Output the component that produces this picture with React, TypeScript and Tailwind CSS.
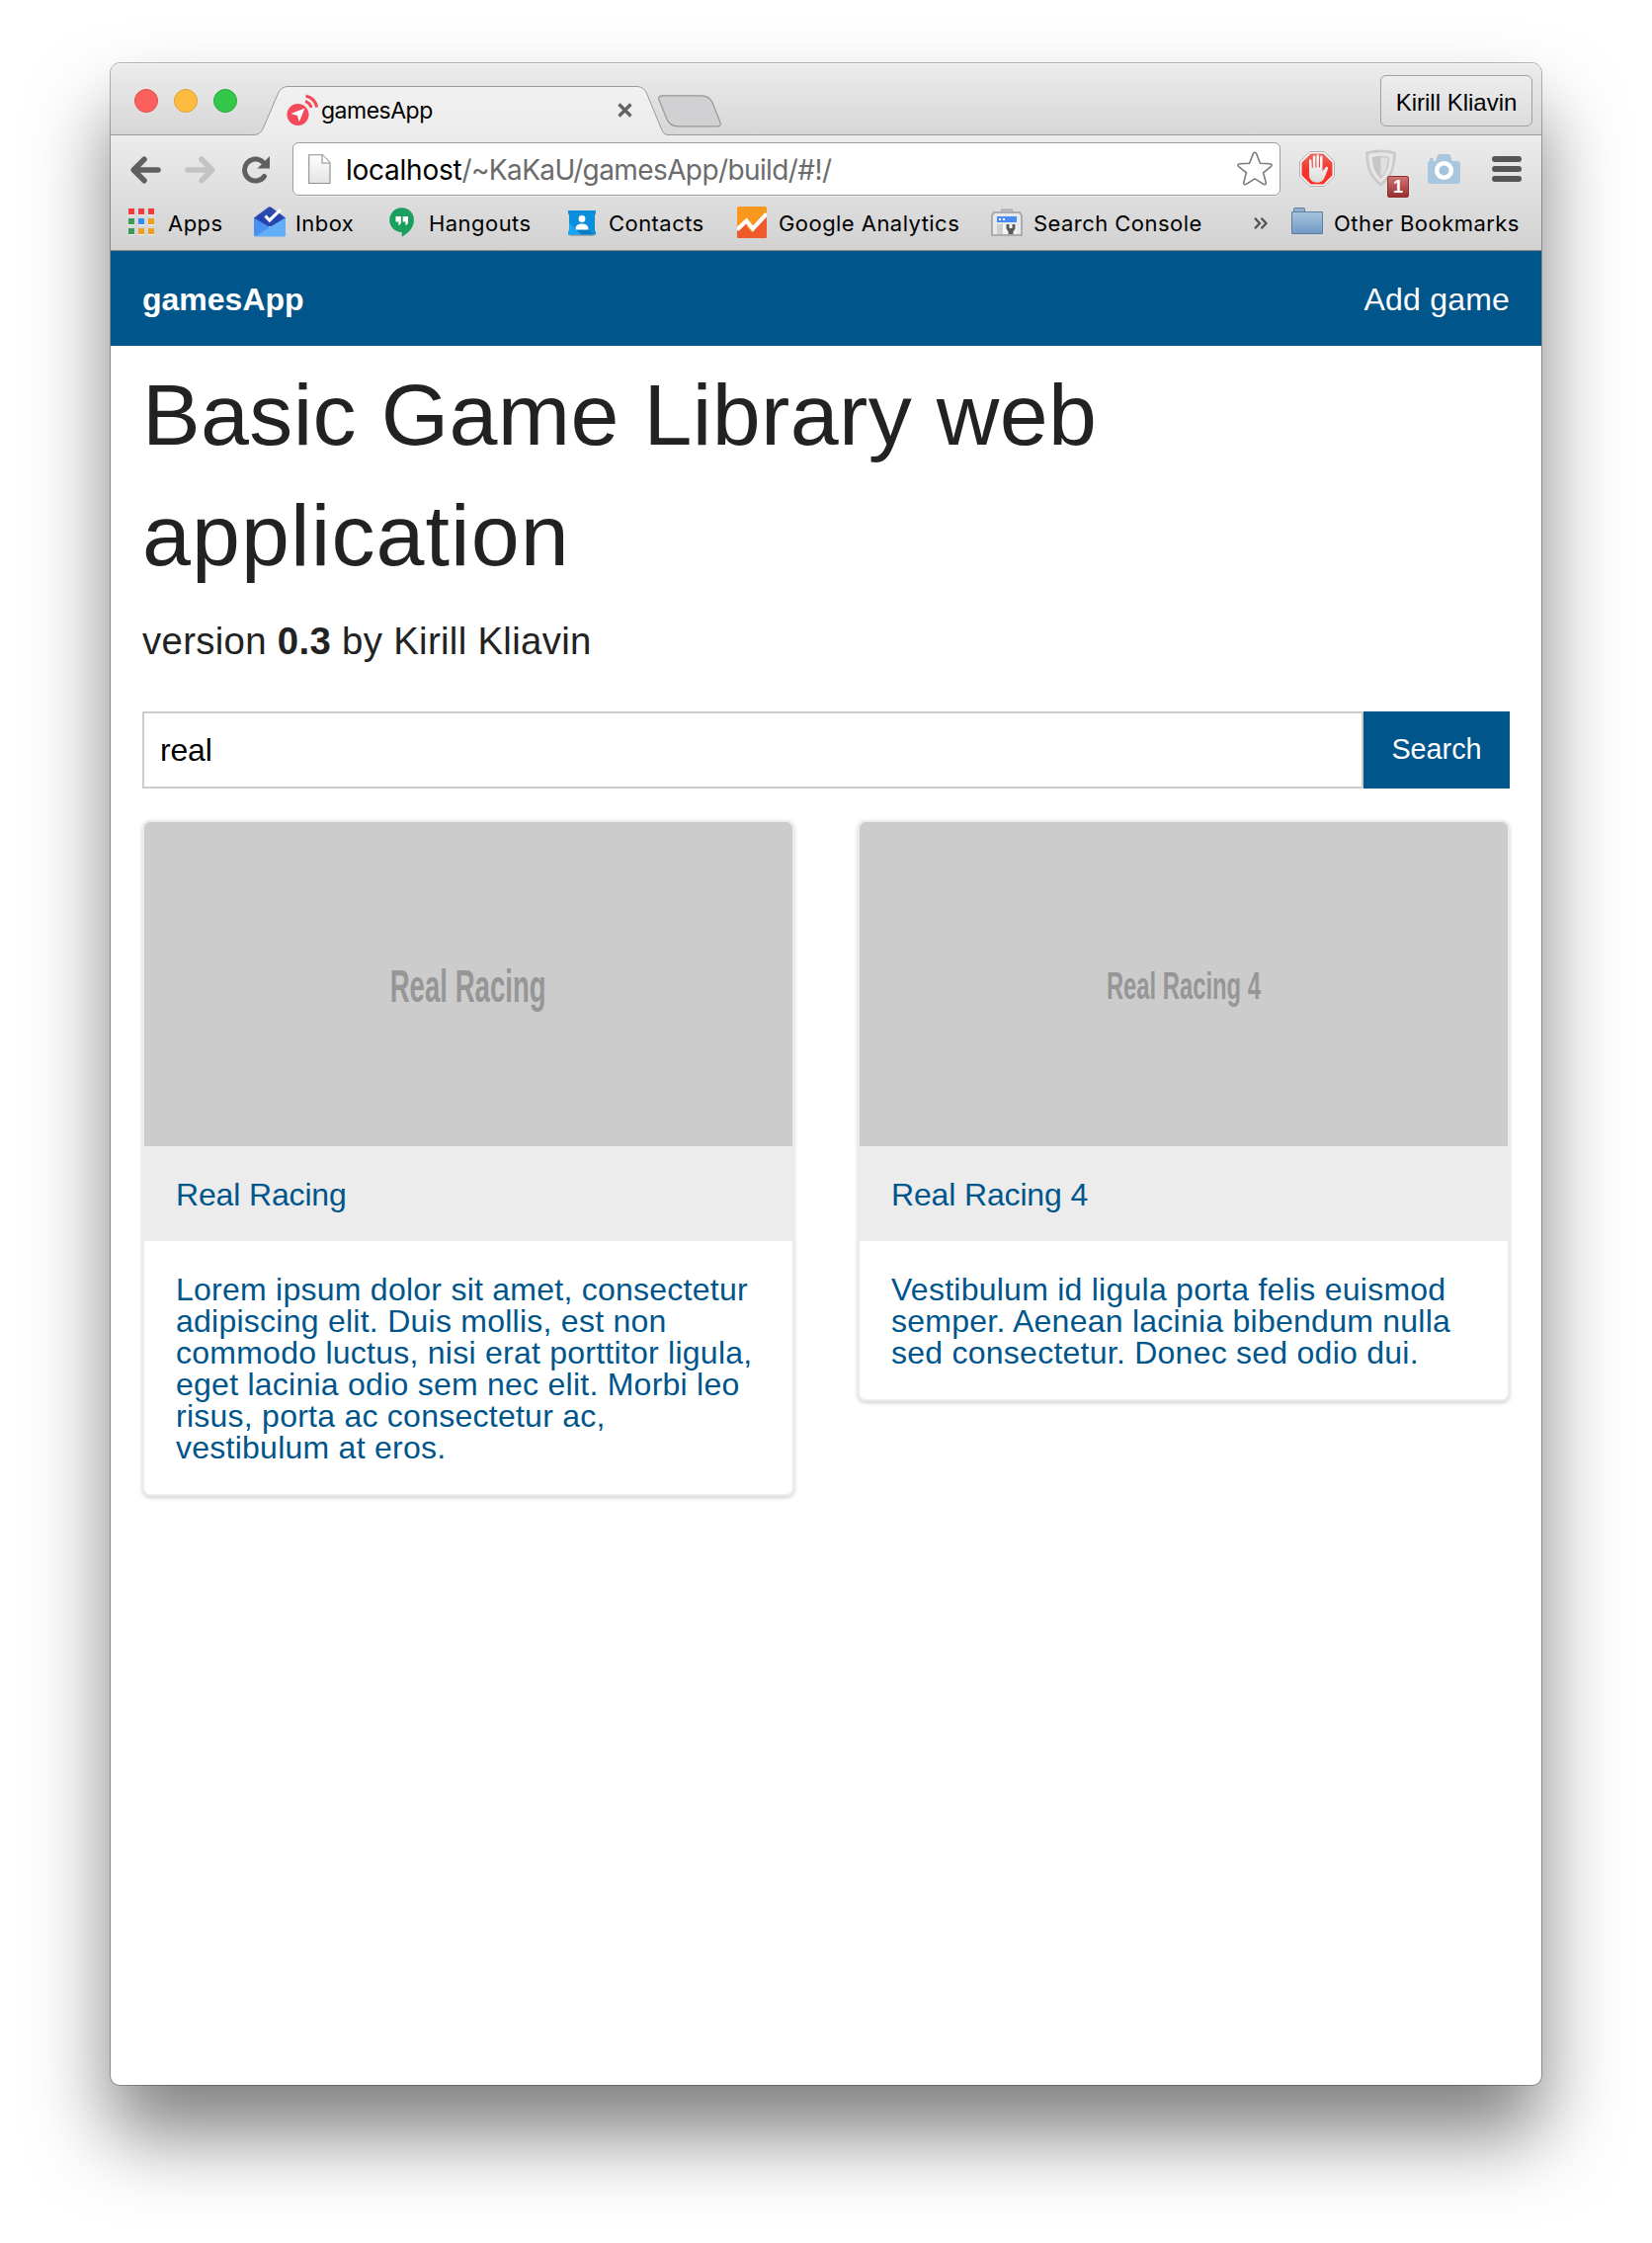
import type { ReactNode } from "react";

const HELV = "font-['Liberation_Sans',Arial,sans-serif]";
const SYS = "font-['Inter',sans-serif]";

function TabFavicon() {
  return (
    <svg width="34" height="34" viewBox="0 0 34 34" fill="none">
      <circle cx="11.500" cy="21" r="11" fill="#f5495c" />
      <path d="M18.500 14.500 4.500 20l6.500 2 1.800 6.300z" fill="#fff" />
      <path d="M19 7.500a9.500 9.500 0 0 1 6 6.300" stroke="#f5495c" strokeWidth="3" />
      <path d="M19.500 2a15 15 0 0 1 11.200 11.500" stroke="#f5495c" strokeWidth="3" />
    </svg>
  );
}

function TabStrip() {
  return (
    <div className="relative flex h-[73px] rounded-t-[10px] border-b border-[#9b9b9b] bg-linear-to-b from-[#ececec] to-[#d7d7d7] shadow-[inset_0_1px_0_#f6f6f6]">
      <div className="ml-6 mt-[26px] flex gap-4">
        <span className="size-6 rounded-full border border-[#e24b46] bg-[#fc605c]" />
        <span className="size-6 rounded-full border border-[#dfa133] bg-[#fdbc40]" />
        <span className="size-6 rounded-full border border-[#27aa35] bg-[#34c84a]" />
      </div>
      <div className="relative ml-4 h-[74px] w-[424px]">
        <svg className="absolute inset-0" width="424" height="74" viewBox="0 0 424 74">
          <defs>
            <linearGradient id="tab" x1="0" y1="0" x2="0" y2="1">
              <stop offset="0" stopColor="#f1f1f1" />
              <stop offset="1" stopColor="#ececec" />
            </linearGradient>
          </defs>
          <path
            d="M0 72.500C5 72.500 8 71 10.500 65.500L25 31.500C28 25 31 23.500 37 23.500H387C393 23.500 396 25 399 31.500L413 65.500C415.500 71 416 72.500 422 72.500V75H0z"
            fill="url(#tab)"
          />
          <path
            d="M0 72.500C5 72.500 8 71 10.500 65.500L25 31.500C28 25 31 23.500 37 23.500H387C393 23.500 396 25 399 31.500L413 65.500C415.500 71 416 72.500 422 72.500"
            fill="none"
            stroke="#999"
          />
        </svg>
        <div className="relative flex items-start pl-[34px] pt-[31px]">
          <TabFavicon />
          <span className={`ml-[1px] mt-[3px] text-[23px] leading-[28px] tracking-[-0.5px] text-black ${SYS}`}>gamesApp</span>
          <svg className="ml-auto mr-[40px] mt-[9px]" width="15" height="15" viewBox="0 0 15 15" stroke="#636363" strokeWidth="3.200">
            <path d="M1.500 1.500l12 12M13.500 1.500l-12 12" />
          </svg>
        </div>
      </div>
      <svg className="-ml-[14px] mt-8" width="66" height="34" viewBox="0 0 66 34">
        <path d="M4 .8H44c6 0 9 2.500 11 7l8 20c1 2.500 0 4-2.500 4H20c-6 0-9-2.500-11-7L1 5C0 2.500 1.500.8 4 .8z" fill="#d1d1d3" stroke="#989898" strokeWidth="1.200" />
      </svg>
      <div className="ml-auto mr-[9px] mt-3 flex h-[52px] w-[154px] items-center justify-center rounded-[6px] border border-[#a0a0a0] bg-linear-to-b from-[#ededed] to-[#dcdcdc] pt-[3px]">
        <span className={`whitespace-nowrap text-[24px] text-black ${HELV}`}>Kirill Kliavin</span>
      </div>
    </div>
  );
}

function Back({ color }: { color: string }) {
  return (
    <svg width="31" height="28" viewBox="0 0 31 28" fill="none" stroke={color} strokeWidth="5.500" strokeLinecap="round" strokeLinejoin="round">
      <path d="M28 14H5M14 3.200 3.200 14 14 24.800" />
    </svg>
  );
}

function Toolbar() {
  return (
    <div className="flex h-[62px] items-start pl-[20px] pt-[7px]">
      <div className="mt-[14px] flex">
        <Back color="#5f5f5f" />
        <div className="ml-6 -scale-x-100">
          <Back color="#c3c3c3" />
        </div>
        <svg className="ml-[27px]" width="29" height="28" viewBox="0 0 29 28" fill="none">
          <path d="M22.500 20.500A11 11 0 1 1 21 6" stroke="#5f5f5f" strokeWidth="5" strokeLinecap="round" />
          <path d="M28 0v12.500H15.500z" fill="#5f5f5f" />
        </svg>
      </div>
      <div className="ml-[22px] flex h-[54px] w-[1000px] items-start rounded-[6px] border border-[#9c9c9c] bg-white shadow-[0_1px_0_#ececec]">
        <svg className="ml-[15px] mt-[11px]" width="23" height="31" viewBox="0 0 23 31">
          <defs>
            <linearGradient id="page" x1="0" y1="0" x2="0" y2="1">
              <stop offset="0" stopColor="#fff" />
              <stop offset="1" stopColor="#e4e4e4" />
            </linearGradient>
          </defs>
          <path d="M.7.7H14.500L22 8.500V29.500H.7z" fill="url(#page)" stroke="#8e8e8e" strokeWidth="1.100" />
          <path d="M14 .7V9H22" fill="#fff" stroke="#8e8e8e" strokeWidth="1.100" />
        </svg>
        <span className={`ml-[15px] mt-[10px] text-[28px] leading-[34px] tracking-[-0.6px] text-[#6b6b6b] ${SYS}`}>
          <span className="tracking-[-0.25px] text-black">localhost</span>/~KaKaU/gamesApp/build/#!/
        </span>
        <svg className="ml-auto mr-[7px] mt-[8px]" width="36" height="36" viewBox="0 0 36 36">
          <path d="M18 1.200c.9 0 1.400.7 1.800 1.700l3.600 9.300 9.700.5c2.200.1 2.600 1.800 1.100 3l-7.600 6.100 2.500 9.500c.6 2.200-.8 3.100-2.600 1.900L18 27.900l-8.500 5.300c-1.800 1.200-3.200.3-2.600-1.900l2.500-9.500-7.600-6.100c-1.500-1.200-1.100-2.900 1.100-3l9.700-.5 3.600-9.300c.4-1 .9-1.700 1.800-1.700z" fill="#fff" stroke="#7d7d7d" strokeWidth="1.600" />
        </svg>
      </div>
      <svg className="ml-[19px] mt-[9px]" width="36" height="36" viewBox="0 0 36 36">
        <defs>
          <linearGradient id="stop" x1="0" y1="0" x2="0" y2="1">
            <stop offset="0" stopColor="#e96a5e" />
            <stop offset=".5" stopColor="#f4352c" />
            <stop offset="1" stopColor="#fb3026" />
          </linearGradient>
          <linearGradient id="hand" x1="0" y1="0" x2="0" y2="1">
            <stop offset="0" stopColor="#fff" />
            <stop offset="1" stopColor="#dadada" />
          </linearGradient>
        </defs>
        <path d="M10.800.6H25.200L35.400 10.800V25.200L25.200 35.400H10.800L.6 25.200V10.800z" fill="#fff" stroke="#a8a8a8" strokeWidth="1" />
        <path d="M11.600 2.500H24.400L33.500 11.600V24.400L24.400 33.500H11.600L2.500 24.400V11.600z" fill="url(#stop)" />
        <path d="M10 9.500c0-1.800 2.300-1.800 2.400 0l.4 7.500h1V6c0-1.900 2.500-1.900 2.500 0v10.500h1.100V4.900c0-1.900 2.500-1.900 2.500 0v11.600h1.100V6.200c0-1.900 2.500-1.900 2.500 0V20.500l2.800-3.800c1.200-1.600 3.600-.8 2.700 1.300-1.500 3.400-2.200 6.500-3.900 9.500-1.200 2.400-3 4.200-6.800 4.200-5.600 0-8.300-3-8.300-8.500z" fill="url(#hand)" />
      </svg>
      <div className="relative ml-[30px] mt-[7px] h-[38px] w-[33px]">
        <svg width="33" height="38" viewBox="0 0 33 38">
          <path d="M16.500 1.800c5 0 9.500.7 13.800 2 .6 14.500-3.500 24-13.800 32C6.200 27.800 2.100 18.300 2.700 3.800 7 2.500 11.500 1.800 16.500 1.800z" fill="#e6e6e6" stroke="#cacaca" strokeWidth="2.800" />
          <path d="M16.500 7.500c3 0 5.600.4 8 1.200 0 8.500-2.200 14.500-8 20.300-5.800-5.800-8-11.800-8-20.300 2.400-.8 5-1.200 8-1.200z" fill="#e0e0e0" stroke="#c9c9c9" strokeWidth="1.500" />
          <path d="M16.500 7.500c-3 0-5.600.4-8 1.200 0 8.500 2.200 14.500 8 20.300z" fill="#c6c6c6" />
        </svg>
        <span className={`absolute left-[23px] top-[27px] flex size-[22px] items-center justify-center rounded-[2px] border border-[#8f2f2f] bg-linear-to-b from-[#d07373] to-[#983030] text-[18px] font-bold text-white ${HELV}`}>1</span>
      </div>
      <svg className="ml-[30px] mt-[11px]" width="35" height="33" viewBox="0 0 35 33">
        <path d="M3 8V5.500c0-1 3.500-1 3.500 0V8H9L11 2.500C11.300 1.300 12 1 13 1h9c1 0 1.700.3 2 1.500L25.500 8H31c2 0 3 1 3 3V28c0 2-1 3-3 3H4c-2 0-3-1-3-3V11c0-2 .5-3 2-3z" fill="#a9c6df" />
        <circle cx="17.500" cy="17.500" r="7.300" fill="#a4c2dc" stroke="#fff" strokeWidth="4.600" />
      </svg>
      <div className="ml-[31px] mt-[14px] flex w-[30px] flex-col gap-[4px]">
        <span className="h-[6px] rounded-full bg-[#555]" />
        <span className="h-[6px] rounded-full bg-[#555]" />
        <span className="h-[6px] rounded-full bg-[#555]" />
      </div>
    </div>
  );
}

function AppsIcon() {
  const colors = ["#f03c3c", "#f03c3c", "#f03c3c", "#3a9b58", "#2f8df0", "#ef9f22", "#3a9b58", "#ef9f22", "#ef9f22"];
  return (
    <svg width="26" height="28" viewBox="0 0 26 28">
      {colors.map((c, i) => (
        <g key={i}>
          <rect x={(i % 3) * 10} y={Math.floor(i / 3) * 10 + 1} width="6" height="6" fill="#f2f2f2" />
          <rect x={(i % 3) * 10} y={Math.floor(i / 3) * 10} width="6" height="6" fill={c} />
        </g>
      ))}
    </svg>
  );
}

function InboxIcon() {
  return (
    <svg width="32" height="31" viewBox="0 0 32 31">
      <path d="M0 11.500 14.500.8c1-.7 2-.7 3 0L32 11.500V20H0z" fill="#2e4aaf" />
      <path d="M4 8.500H28V20H4z" fill="#2745b0" />
      <path d="M0 11.500 16 21 32 11.500V29c0 .8-.5 1.200-1.200 1.200H1.200C.5 30.200 0 29.800 0 29z" fill="#4a90f0" />
      <path d="M32 11.500V29c0 .8-.5 1.200-1.200 1.200H1.200L16 21z" fill="#63aef8" />
      <path d="M11.500 9.500l4.300 4.500L27 3.200" fill="none" stroke="#fff" strokeWidth="3.200" />
    </svg>
  );
}

function HangoutsIcon() {
  return (
    <svg width="26" height="30" viewBox="0 0 26 30">
      <path d="M12.700.3C5.700.3.2 5.800.2 12.700c0 6.800 5.500 12.200 12.500 12.200V29.500c6.500-3.300 12.300-9.300 12.300-16.800C25 5.800 19.600.3 12.700.3z" fill="#1b9f5f" />
      <path d="M6.500 9h5.400v5.500c0 1.700-.8 3-2.500 3.500v-3.600H6.500zM13.700 9H19v5.500c0 1.700-.8 3-2.500 3.500v-3.600h-2.800z" fill="#fff" />
    </svg>
  );
}

function ContactsIcon() {
  return (
    <svg width="28" height="27" viewBox="0 0 28 27">
      <path d="M2 24.500H26V26H2z" fill="#a9a9a9" />
      <path d="M0 0H28V3L27 5V20l1 2v2.500H0V22l1-2V5L0 3z" fill="#0b8fdc" />
      <path d="M8 19.500 20 19l6 5.500H13z" fill="#0a7cc4" />
      <path d="M0 24.500V22l1-2V12L13 24.500z" fill="#16a6f5" />
      <circle cx="14" cy="8.500" r="3.400" fill="#fff" />
      <path d="M7.700 19.500V17.700c0-2.700 3-4.200 6.300-4.200s6.300 1.500 6.300 4.200v1.800z" fill="#fff" />
    </svg>
  );
}

function AnalyticsIcon() {
  return (
    <svg width="30" height="32" viewBox="0 0 30 32">
      <rect width="30" height="32" rx="1.500" fill="#f8981d" />
      <path d="M0 25 10 16 16 22 30 8V30.500c0 .8-.7 1.500-1.500 1.500h-27C.7 32 0 31.300 0 30.500z" fill="#ee5a2c" />
      <path d="M10 16v5l5 5 3-3z" fill="#f8981d" />
      <path d="M0 23.500 9.500 14.500 16 22.500 30 7.500" fill="none" stroke="#fff" strokeWidth="4.200" />
    </svg>
  );
}

function ConsoleIcon() {
  return (
    <svg width="32" height="28" viewBox="0 0 32 28">
      <path d="M11 3.500V1.500H21V3.500" fill="none" stroke="#a9acb0" strokeWidth="2" />
      <path d="M3 4H29L31 7V27H1V7z" fill="#e9e9e9" stroke="#a9acb0" strokeWidth="2" />
      <rect x="6" y="8" width="20" height="6" fill="#4a8cf5" />
      <rect x="8" y="10" width="2" height="2" fill="#fff" />
      <rect x="12" y="10" width="2" height="2" fill="#fff" />
      <rect x="6" y="16" width="6" height="10" fill="#cfcfcf" />
      <rect x="12" y="16" width="14" height="10" fill="#f6f6f6" />
      <path d="M15.500 16h3v4h3v-4h3v4.500l-2 3V26h-5v-2.500l-2-3z" fill="#5a5a5a" />
    </svg>
  );
}

function FolderIcon() {
  return (
    <svg width="32" height="28" viewBox="0 0 32 28">
      <defs>
        <linearGradient id="folder" x1="0" y1="0" x2="0" y2="1">
          <stop offset="0" stopColor="#a8c4de" />
          <stop offset="1" stopColor="#7099c3" />
        </linearGradient>
      </defs>
      <path d="M2.500 4V1.500c0-.6.4-1 1-1h9c.6 0 1 .4 1 1V4" fill="#8fb0d0" stroke="#5e7f9f" />
      <path d="M.5 4.500h31v22H.5z" fill="url(#folder)" stroke="#5e7f9f" />
    </svg>
  );
}

function Bookmark({ icon, label, box, cell }: { icon: ReactNode; label: string; box: string; cell: string }) {
  return (
    <div className={`flex shrink-0 items-start ${box}`}>
      <span className={`shrink-0 ${cell}`}>{icon}</span>
      <span className={`whitespace-nowrap text-[22px] leading-[28px] tracking-[0.45px] text-black ${SYS}`}>{label}</span>
    </div>
  );
}

function BookmarksBar() {
  return (
    <div className="flex h-[54px] items-start pl-[18px] pt-[13px]">
      <Bookmark icon={<AppsIcon />} label="Apps" box="w-[127px]" cell="w-[40px] -mt-px" />
      <Bookmark icon={<InboxIcon />} label="Inbox" box="w-[137px]" cell="w-[42px] -mt-[3px]" />
      <Bookmark icon={<HangoutsIcon />} label="Hangouts" box="w-[181px]" cell="w-[40px] -mt-[2px]" />
      <Bookmark icon={<ContactsIcon />} label="Contacts" box="w-[171px]" cell="w-[41px] pt-px" />
      <Bookmark icon={<AnalyticsIcon />} label="Google Analytics" box="w-[257px]" cell="w-[42px] -mt-[3px]" />
      <Bookmark icon={<ConsoleIcon />} label="Search Console" box="w-[266px]" cell="w-[43px] -mt-px" />
      <svg className="mt-2" width="14" height="12" viewBox="0 0 14 12" fill="none" stroke="#505050" strokeWidth="2.200">
        <path d="M1 .8 6 6l-5 5.200M7.500.8 12.500 6l-5 5.200" />
      </svg>
      <div className="ml-6">
        <Bookmark icon={<FolderIcon />} label="Other Bookmarks" box="" cell="w-[43px] -mt-[2px]" />
      </div>
    </div>
  );
}

function Card({ title, art, lines }: { title: string; art: string; lines: string[] }) {
  return (
    <article className={`w-[660px] rounded-[8px] border-2 border-[#ececec] bg-white text-[32px] leading-8 text-[#00558b] shadow-[0_2px_4px_rgba(0,0,0,0.18)] ${HELV}`}>
      <div className="flex h-[328px] items-center justify-center rounded-t-[6px] bg-[#ccc] pt-[3px]">
        <span className={`whitespace-nowrap font-bold text-[#969696] ${art}`}>{title}</span>
      </div>
      <div className="bg-[#ececec] px-8 pb-[31px] pt-[33px] tracking-[-0.15px]">{title}</div>
      <div className="px-8 pb-[31px] pt-[33px] tracking-[0.25px]">
        {lines.map((line) => (
          <p key={line} className="whitespace-nowrap">
            {line}
          </p>
        ))}
      </div>
    </article>
  );
}

export default function App() {
  return (
    <div className="h-[2270px] w-[1672px] overflow-hidden bg-white px-[112px] pt-16">
      <div className="h-[2046px] rounded-t-[10px] rounded-b-[9px] bg-white shadow-[0_0_0_1px_rgba(0,0,0,0.28),0_50px_80px_rgba(0,0,0,0.5)]">
        <TabStrip />
        <div className="h-[117px] border-b border-[#8a8a8a] bg-linear-to-b from-[#ececec] to-[#d2d2d2]">
          <Toolbar />
          <BookmarksBar />
        </div>
        <nav className={`flex h-24 items-center justify-between bg-[#00558b] px-8 pt-[2px] text-[32px] text-white ${HELV}`}>
          <span className="font-bold">gamesApp</span>
          <span className="tracking-[0.2px]">Add game</span>
        </nav>
        <main className={`px-8 text-[#222] ${HELV}`}>
          <h1 className="pt-[9px] text-[88px] leading-[122px] tracking-[0.35px]">
            Basic Game Library web
            <br />
            <span className="tracking-[1.1px]">application</span>
          </h1>
          <p className="mt-[19px] text-[38.4px] leading-[54px] tracking-[0.3px]">
            version <b>0.3</b> by Kirill Kliavin
          </p>
          <div className="mt-[44px] flex h-[78px]">
            <div className="flex flex-1 items-center border-2 border-[#ccc] px-4 text-[32px] tracking-[-0.2px] text-black">real</div>
            <button className="w-[148px] bg-[#00558b] text-[28.8px] text-white">Search</button>
          </div>
          <div className="mt-8 flex items-start justify-between">
            <Card
              title="Real Racing"
              art="scale-x-[0.6] text-[46px]"
              lines={[
                "Lorem ipsum dolor sit amet, consectetur",
                "adipiscing elit. Duis mollis, est non",
                "commodo luctus, nisi erat porttitor ligula,",
                "eget lacinia odio sem nec elit. Morbi leo",
                "risus, porta ac consectetur ac,",
                "vestibulum at eros.",
              ]}
            />
            <Card
              title="Real Racing 4"
              art="scale-x-[0.61] text-[39px]"
              lines={["Vestibulum id ligula porta felis euismod", "semper. Aenean lacinia bibendum nulla", "sed consectetur. Donec sed odio dui."]}
            />
          </div>
        </main>
      </div>
    </div>
  );
}
